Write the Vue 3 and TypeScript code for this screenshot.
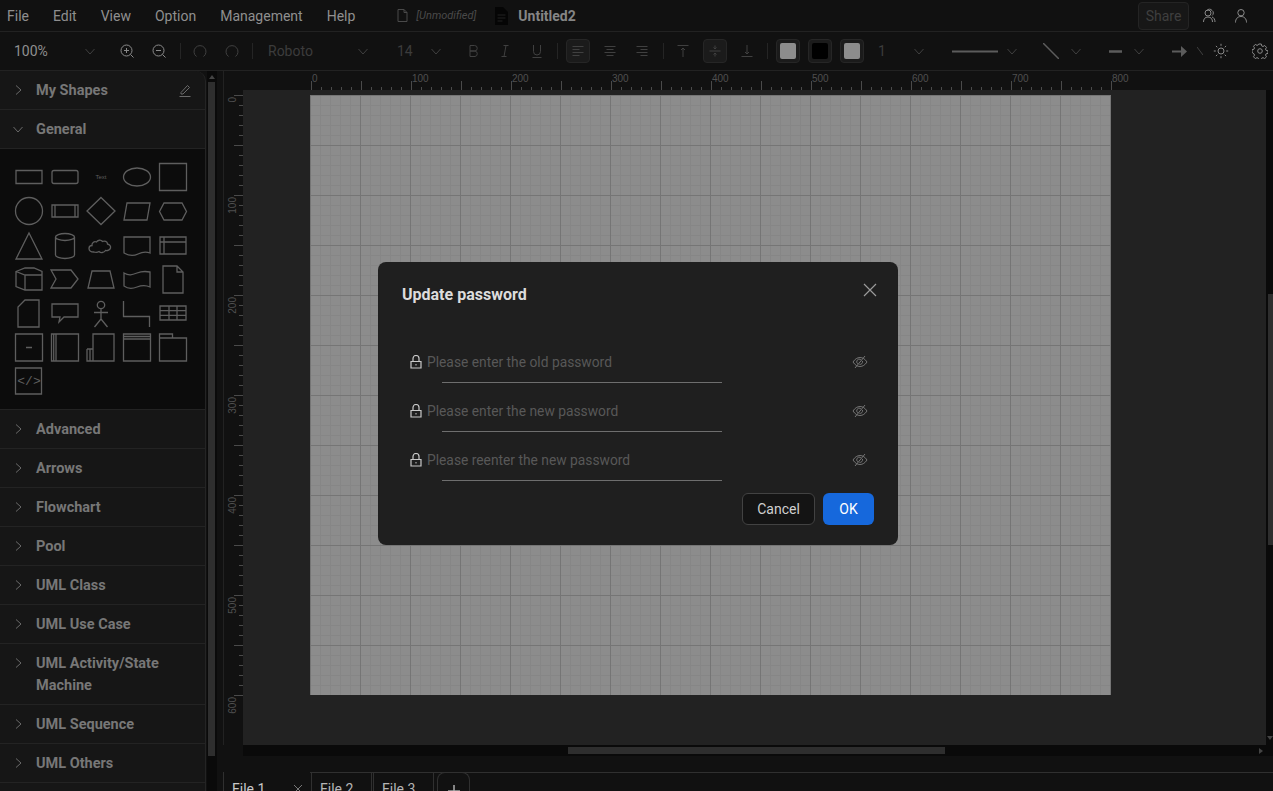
<script setup lang="ts">
interface ToolItem {
  kind: 'text' | 'icon' | 'sep' | 'swatch'
  ml: number
  w?: number
  label?: string
  icon?: string
  active?: boolean
  fill?: string
  dim?: boolean
}

interface Shape {
  d: string
  text?: string
  mono?: boolean
}

const icons: Record<string, string> = {
  chevron: 'M3.5 6l4.5 5 4.5-5',
  zoomIn: 'M2 7.5a5.5 5.5 0 1 0 11 0a5.5 5.5 0 1 0-11 0zM11.5 11.5l3 3M7.5 5v5M5 7.5h5',
  zoomOut: 'M2 7.5a5.5 5.5 0 1 0 11 0a5.5 5.5 0 1 0-11 0zM11.5 11.5l3 3M5 7.5h5',
  undo: 'M4.5 13.5a6 6 0 1 1 7 0',
  bold: 'M5 2.5h4.5a2.7 2.7 0 0 1 0 5.5H5zM5 8h5a2.8 2.8 0 0 1 0 5.5H5z',
  italic: 'M6.5 2.5h5M4.5 13.5h5M9 2.5l-2 11',
  underline: 'M4.5 2v6.5a3.5 3.5 0 0 0 7 0V2M3.5 14.5h9',
  alignLeft: 'M2.5 3.5h11M2.5 6.5h7M2.5 9.5h11M2.5 12.5h7',
  alignCenter: 'M2.5 3.5h11M4.5 6.5h7M2.5 9.5h11M4.5 12.5h7',
  alignRight: 'M2.5 3.5h11M6.5 6.5h7M2.5 9.5h11M6.5 12.5h7',
  alignTop: 'M2.5 2.5h11M8 5v9M6 7l2-2 2 2',
  alignMiddle: 'M2.5 8h11M8 2.5v3.5M8 10v3.5M6.5 4.5L8 6l1.5-1.5M6.5 11.5L8 10l1.5 1.5',
  alignBottom: 'M2.5 13.5h11M8 2v9M6 9l2 2 2-2',
  sun: 'M5 8a3 3 0 1 0 6 0a3 3 0 1 0-6 0zM8 .8v2M8 13.2v2M.8 8h2M13.2 8h2M2.9 2.9l1.4 1.4M11.7 11.7l1.4 1.4M2.9 13.1l1.4-1.4M11.7 4.3l1.4-1.4',
  gear: 'M6.7 1h2.6l.4 1.9 1.3.6 1.7-1 1.8 1.9-1 1.6.6 1.4 1.9.4v2.6l-1.9.4-.6 1.3 1 1.7-1.8 1.8-1.7-1-1.3.6-.4 1.9H6.7l-.4-1.9-1.3-.6-1.7 1-1.8-1.8 1-1.7-.6-1.3L0 9.3V6.7l1.9-.4.6-1.4-1-1.6 1.8-1.9 1.7 1 1.3-.6zM5.7 8a2.3 2.3 0 1 0 4.6 0a2.3 2.3 0 1 0-4.6 0z',
}

const toolbar: ToolItem[] = [
  { kind: 'text', ml: 14, w: 34, label: '100%' },
  { kind: 'icon', ml: 30, icon: 'chevron', dim: true },
  { kind: 'icon', ml: 13, icon: 'zoomIn' },
  { kind: 'icon', ml: 8, icon: 'zoomOut' },
  { kind: 'sep', ml: 9 },
  { kind: 'icon', ml: 7, icon: 'undo', dim: true },
  { kind: 'icon', ml: 8, icon: 'undo', dim: true },
  { kind: 'sep', ml: 8 },
  { kind: 'text', ml: 15, w: 50, label: 'Roboto', dim: true },
  { kind: 'icon', ml: 33, icon: 'chevron', dim: true },
  { kind: 'text', ml: 22, w: 14, label: '14', dim: true },
  { kind: 'icon', ml: 13, icon: 'chevron', dim: true },
  { kind: 'icon', ml: 13, icon: 'bold', dim: true },
  { kind: 'icon', ml: 8, icon: 'italic', dim: true },
  { kind: 'icon', ml: 8, icon: 'underline', dim: true },
  { kind: 'sep', ml: 8 },
  { kind: 'icon', ml: 8, icon: 'alignLeft', active: true, dim: true },
  { kind: 'icon', ml: 8, icon: 'alignCenter', dim: true },
  { kind: 'icon', ml: 8, icon: 'alignRight', dim: true },
  { kind: 'sep', ml: 9 },
  { kind: 'icon', ml: 7, icon: 'alignTop', dim: true },
  { kind: 'icon', ml: 8, icon: 'alignMiddle', active: true, dim: true },
  { kind: 'icon', ml: 8, icon: 'alignBottom', dim: true },
  { kind: 'sep', ml: 8 },
  { kind: 'swatch', ml: 8, fill: '#8c8c8c' },
  { kind: 'swatch', ml: 8, fill: '#000' },
  { kind: 'swatch', ml: 8, fill: '#8c8c8c' },
  { kind: 'text', ml: 14, w: 8, label: '1', dim: true },
  { kind: 'icon', ml: 21, icon: 'chevron', dim: true },
]

const shapes: Shape[] = [
  { d: 'M5 10.5h26v13H5z' },
  { d: 'M7 10.5h22a2 2 0 0 1 2 2v9a2 2 0 0 1-2 2H7a2 2 0 0 1-2-2v-9a2 2 0 0 1 2-2z' },
  { d: '', text: 'Text' },
  { d: 'M4.5 17a13.5 9 0 1 0 27 0a13.5 9 0 1 0-27 0z' },
  { d: 'M4.5 3.5h27v27h-27z' },
  { d: 'M4.5 17a13.5 13.5 0 1 0 27 0a13.5 13.5 0 1 0-27 0z' },
  { d: 'M5 11h26v12H5zM8 11v12M28 11v12' },
  { d: 'M18 3.5L32 17L18 30.5L4 17z' },
  { d: 'M8 9h23l-3 17H5z' },
  { d: 'M9 9h18l4.5 8.5-4.5 8.5H9L4.5 17.5z' },
  { d: 'M18 5L31 31H5z' },
  { d: 'M8.5 9a9.5 3.5 0 0 1 19 0v18a9.5 3.5 0 0 1-19 0zM8.5 9a9.5 3.5 0 0 0 19 0' },
  { d: 'M11 24c-3 0-5-1.5-5-3.5s1.5-3 3-3c-.5-2.5 2-4.5 4.5-3.5 1-2 4.5-2.5 6-.5 2-1 5 0 5 2.5 2 .5 3.5 2 3 4s-3 3-5 2.5c-1.5 2.5-5 2.5-6.5 1-1.5 1-3.5 1-5 .5z' },
  { d: 'M5 9h26v16c-5-2-8-1-12 1s-9 2-14-1z' },
  { d: 'M5 9h26v17H5zM5 14h26M9 9v17' },
  { d: 'M5 9.5l9-3.5h9l8 3.5V28H14l-9-3.5zM5 9.5l9 3.5h17M14 13v15' },
  { d: 'M4 8h20l7 9-7 9H4l5-9z' },
  { d: 'M9 9h18l4 17H5z' },
  { d: 'M5 11c5 3 8 2 13 0s8-2 13-1v15c-4-2-8-2-13 0s-9 2-13-1z' },
  { d: 'M8 4h14l6 6v21H8zM22 4v6h6' },
  { d: 'M14 4h14v27H7V11z' },
  { d: 'M5 8h26v13H17l-5 5 1-5H5z' },
  { d: 'M14.3 9a3.7 3.7 0 1 0 7.4 0a3.7 3.7 0 1 0-7.4 0zM18 13v10M11 16.5h14M18 23l-6.5 8M18 23l6.5 8' },
  { d: 'M4.5 5v15.5h26V31' },
  { d: 'M5 10h26v14H5zM5 14.7h26M5 19.3h26M14 10v14M22 10v14' },
  { d: 'M4.5 4h27v27h-27zM15 17.5h6' },
  { d: 'M4.5 4h27v27h-27zM9 4v27M6.7 4v27' },
  { d: 'M10 31V4h21v27zM4 19h6M4 19v12h6M7 19v12' },
  { d: 'M4.5 4h27v27h-27zM4.5 9h27M4.5 6.500h27' },
  { d: 'M4.5 4h13v4h14v23h-27zM4.5 8h13' },
  { d: 'M4.5 4h26v26h-26z', text: '</>', mono: true },
]

const topPanels = ['My Shapes', 'General']
const panels = [
  'Advanced',
  'Arrows',
  'Flowchart',
  'Pool',
  'UML Class',
  'UML Use Case',
  'UML Activity/State Machine',
  'UML Sequence',
  'UML Others',
]

const menus = ['File', 'Edit', 'View', 'Option', 'Management', 'Help']
const tabs = ['File 1', 'File 2', 'File 3']
const fields = [
  'Please enter the old password',
  'Please enter the new password',
  'Please reenter the new password',
]

const hTicks = Array.from({ length: 81 }, (_, i) => i * 10)
const vTicks = Array.from({ length: 61 }, (_, i) => i * 10)
</script>

<template>
  <div class="app">
    <header class="menubar">
      <nav class="menus">
        <span v-for="menu in menus" :key="menu">{{ menu }}</span>
      </nav>
      <div class="doc-state">
        <svg width="13" height="15" viewBox="0 0 13 15" fill="none" stroke="#4a4a4a">
          <path d="M2 1.5h6l3 3v9H2zM8 1.5v3h3" />
        </svg>
        <em>[Unmodified]</em>
      </div>
      <div class="doc-name">
        <svg width="13" height="18" viewBox="0 0 13 18">
          <path d="M0 0h8l5 5v13H0z" fill="#050505" />
          <path d="M2.5 8h8M2.5 11h8M2.5 14h5" stroke="#222" />
        </svg>
        <strong>Untitled2</strong>
      </div>
      <div class="menu-right">
        <button class="share" type="button">Share</button>
        <svg width="16" height="16" viewBox="0 0 16 16" fill="none" stroke="#8a8a8a">
          <path d="M4 5a3 3 0 1 0 6 0a3 3 0 1 0-6 0zM2.5 14c0-3 1.500-5 4.500-5s4.500 2 4.500 5M6 2.500a3 3 0 0 1 5 0a3 3 0 0 1 0 5M11 9c2 .5 3 2.500 3 5" />
        </svg>
        <svg width="16" height="16" viewBox="0 0 16 16" fill="none" stroke="#8a8a8a">
          <path d="M4.800 4.700a3.200 3.200 0 1 0 6.400 0a3.200 3.200 0 1 0-6.400 0zM2.500 14.500c0-3.500 2-6 5.500-6s5.500 2.500 5.500 6" />
        </svg>
      </div>
    </header>

    <div class="toolbar">
      <template v-for="(item, i) in toolbar" :key="i">
        <span v-if="item.kind === 'sep'" class="sep" :style="{ marginLeft: item.ml + 'px' }"></span>
        <span
          v-else-if="item.kind === 'text'"
          class="tool-text"
          :class="{ dim: item.dim }"
          :style="{ marginLeft: item.ml + 'px', width: item.w + 'px' }"
        >{{ item.label }}</span>
        <span
          v-else-if="item.kind === 'swatch'"
          class="tool-btn active"
          :style="{ marginLeft: item.ml + 'px' }"
        >
          <i class="swatch" :style="{ background: item.fill }"></i>
        </span>
        <span
          v-else
          class="tool-btn"
          :class="{ active: item.active }"
          :style="{ marginLeft: item.ml + 'px' }"
        >
          <svg width="16" height="16" viewBox="0 0 16 16" fill="none" :stroke="item.dim ? '#404040' : '#8a8a8a'">
            <path :d="icons[item.icon ?? 'chevron']" />
          </svg>
        </span>
      </template>
      <svg class="line-style" width="46" height="3"><path d="M0 1.500h46" stroke="#5c5c5c" stroke-width="2" /></svg>
      <span class="tool-btn chev-2">
        <svg width="16" height="16" viewBox="0 0 16 16" fill="none" stroke="#404040"><path :d="icons.chevron" /></svg>
      </span>
      <svg class="line-diag" width="16" height="16"><path d="M0 0l16 16" stroke="#5c5c5c" stroke-width="1.500" /></svg>
      <span class="tool-btn chev-5">
        <svg width="16" height="16" viewBox="0 0 16 16" fill="none" stroke="#404040"><path :d="icons.chevron" /></svg>
      </span>
      <svg class="line-dash" width="13" height="3"><path d="M0 1.500h13" stroke="#5c5c5c" stroke-width="2.500" /></svg>
      <span class="tool-btn chev-5">
        <svg width="16" height="16" viewBox="0 0 16 16" fill="none" stroke="#404040"><path :d="icons.chevron" /></svg>
      </span>
      <svg class="line-arrow" width="15" height="11"><path d="M0 4.500h9V0l6 5.500L9 11V6.500H0z" fill="#5c5c5c" /></svg>
      <svg class="mini-chev" width="6" height="8"><path d="M0 0l6 8" stroke="#404040" /></svg>
      <span class="tool-btn sun">
        <svg width="16" height="16" viewBox="0 0 16 16" fill="none" stroke="#8a8a8a"><path :d="icons.sun" /></svg>
      </span>
      <span class="tool-btn gear">
        <svg width="16" height="16" viewBox="0 0 16 16" fill="none" stroke="#8a8a8a"><path :d="icons.gear" /></svg>
      </span>
    </div>

    <div class="workspace">
      <aside class="sidebar">
        <div v-for="(title, i) in topPanels" :key="title" class="panel">
          <svg class="chev" :class="{ open: i === 1 }" width="16" height="16" viewBox="0 0 16 16" fill="none" stroke="#6a6a6a">
            <path :d="icons.chevron" />
          </svg>
          <span>{{ title }}</span>
          <svg v-if="i === 0" class="pencil" width="14" height="14" viewBox="0 0 14 14" fill="none" stroke="#6a6a6a">
            <path d="M3 9.500L9.500 2.500l2 2L5 11H3zM1.500 13.500h11" />
          </svg>
        </div>
        <div class="shapes">
          <svg v-for="(shape, i) in shapes" :key="i" width="36" height="34" viewBox="0 0 36 34" fill="none" stroke="#5e5e5e" stroke-width="1.300">
            <path v-if="shape.d" :d="shape.d" />
            <text v-if="shape.text" x="18" :y="shape.mono ? 21 : 19" text-anchor="middle" :class="shape.mono ? 'mono' : 'tiny'">{{ shape.text }}</text>
          </svg>
        </div>
        <div v-for="title in panels" :key="title" class="panel">
          <svg class="chev" width="16" height="16" viewBox="0 0 16 16" fill="none" stroke="#6a6a6a">
            <path :d="icons.chevron" />
          </svg>
          <span>{{ title }}</span>
        </div>
      </aside>
      <div class="side-scroll"><i class="up"></i><b></b></div>

      <main class="editor">
        <div class="ruler-top">
          <svg width="1030" height="20">
            <g v-for="t in hTicks" :key="t">
              <path :d="`M${68.5 + t} ${t % 50 === 0 ? 10 : 16}V21`" stroke="#4a4a4a" />
              <text v-if="t % 100 === 0" :x="69 + t" y="11" class="ruler-label">{{ t }}</text>
            </g>
          </svg>
        </div>
        <div class="canvas-row">
          <div class="ruler-left">
            <svg width="20" height="655">
              <g v-for="t in vTicks" :key="t">
                <path :d="`M${t % 50 === 0 ? 11 : 16} ${5.5 + t}H20`" stroke="#4a4a4a" />
                <text v-if="t % 100 === 0" class="ruler-label" text-anchor="end" :transform="`translate(13 ${t + 7}) rotate(-90)`">{{ t }}</text>
              </g>
            </svg>
          </div>
          <div class="canvas">
            <div class="paper"></div>
          </div>
          <div class="canvas-vscroll"><b></b><i class="down"></i></div>
        </div>
        <div class="canvas-hscroll"><b></b><i class="right"></i></div>
        <div class="tabs">
          <div v-for="(tab, i) in tabs" :key="tab" class="tab" :class="{ current: i === 0 }">
            {{ tab }}
            <svg v-if="i === 0" width="10" height="10" viewBox="0 0 10 10" stroke="#777"><path d="M1 1l8 8M9 1l-8 8" /></svg>
          </div>
          <div class="tab add">
            <svg width="14" height="14" viewBox="0 0 14 14" stroke="#aaa" stroke-width="1.500"><path d="M7 1v12M1 7h12" /></svg>
          </div>
        </div>
      </main>
    </div>

    <div class="mask">
      <form class="dialog" @submit.prevent>
        <svg class="close" width="14" height="14" viewBox="0 0 14 14" stroke="#9a9a9a" stroke-width="1.200"><path d="M1 1l12 12M13 1L1 13" /></svg>
        <h2>Update password</h2>
        <div class="fields">
          <div v-for="field in fields" :key="field" class="field">
            <label class="field-row">
              <svg width="12" height="14" viewBox="0 0 12 14" fill="none" stroke="#c8c8c8" stroke-width="1.200">
                <path d="M1 6.500h10v6.500H1zM3 6.500V3.500a3 3 0 0 1 6 0v3" />
                <path d="M5.500 9.700h1" stroke-width="1.600" />
              </svg>
              <input type="password" :placeholder="field" />
              <svg width="16" height="14" viewBox="0 0 16 14" fill="none" stroke="#747474">
                <path d="M1 7c2-3 4.300-4.500 7-4.500S13 4 15 7c-2 3-4.300 4.500-7 4.500S3 10 1 7zM5.800 8.800a2.500 2.500 0 0 1 3-4.200M10.400 6a2.500 2.500 0 0 1-3 3.300M13 1L3 13" />
              </svg>
            </label>
            <div class="field-line"></div>
          </div>
        </div>
        <footer class="actions">
          <button type="button" class="btn-cancel">Cancel</button>
          <button type="submit" class="btn-ok">OK</button>
        </footer>
      </form>
    </div>
  </div>
</template>

<style>
html,
body {
  background: #111;
  margin: 0;
  overflow: hidden;
}
</style>

<style scoped>
.app {
  background: #111;
  color: #8f8f8f;
  display: flex;
  flex-direction: column;
  font-family: Roboto, 'Noto Sans', sans-serif;
  font-size: 14px;
  height: 791px;
  overflow: hidden;
  position: relative;
  width: 1273px;
}

.menubar {
  align-items: center;
  border-bottom: 1px solid #222;
  box-sizing: border-box;
  display: flex;
  flex: none;
  height: 32px;
  padding-left: 7px;
}

.menus {
  display: flex;
  gap: 24px;
}

.doc-state {
  align-items: center;
  color: #4a4a4a;
  display: flex;
  font-size: 11px;
  gap: 7px;
  margin-left: 41px;
  width: 99px;
}

.doc-name {
  align-items: center;
  display: flex;
  gap: 10px;
}

.doc-name strong {
  color: #858585;
}

.menu-right {
  align-items: center;
  display: flex;
  gap: 16px;
  margin-left: auto;
  padding-right: 24px;
}

.share {
  background: #171717;
  border: 1px solid #242424;
  border-radius: 4px;
  color: #3f3f3f;
  font: inherit;
  height: 28px;
  margin-right: -4px;
  padding: 0;
  width: 51px;
}

.toolbar {
  align-items: center;
  box-sizing: border-box;
  display: flex;
  flex: none;
  height: 38px;
}

.tool-text {
  white-space: nowrap;
}

.tool-text.dim {
  color: #3c3c3c;
}

.sep {
  background: #252525;
  height: 16px;
  width: 1px;
}

.tool-btn {
  align-items: center;
  border: 1px solid transparent;
  border-radius: 4px;
  box-sizing: border-box;
  display: flex;
  flex: none;
  height: 24px;
  justify-content: center;
  width: 24px;
}

.tool-btn.active {
  background: #1b1b1b;
  border-color: #262626;
}

.swatch {
  border-radius: 2px;
  height: 16px;
  width: 16px;
}

.line-style {
  margin-left: 21px;
}

.chev-2 {
  margin-left: 2px;
}

.line-diag {
  margin-left: 19px;
}

.chev-5 {
  margin-left: 5px;
}

.line-dash,
.line-arrow {
  margin-left: 21px;
}

.mini-chev {
  margin-left: 10px;
}

.sun {
  margin-left: 6px;
}

.gear {
  margin-left: 15px;
}

.workspace {
  border-top: 1px solid #222;
  display: flex;
  flex: 1;
  min-height: 0;
}

.sidebar {
  background: #161616;
  border-radius: 0 10px 0 0;
  border-right: 1px solid #242424;
  box-sizing: border-box;
  flex: none;
  height: 720px;
  overflow: hidden;
  width: 206px;
}

.panel {
  align-items: center;
  border-bottom: 1px solid #232323;
  box-sizing: border-box;
  color: #777;
  display: flex;
  font-size: 14.5px;
  font-weight: 700;
  line-height: 22px;
  min-height: 39px;
  padding: 9px 36px 7px;
  position: relative;
}

.panel span {
  display: block;
}

.chev {
  left: 10px;
  position: absolute;
  top: 11px;
  transform: rotate(-90deg);
}

.chev.open {
  transform: none;
}

.pencil {
  position: absolute;
  right: 13px;
  top: 12px;
}

.shapes {
  background: #0c0c0c;
  border-bottom: 1px solid #232323;
  box-sizing: border-box;
  display: grid;
  grid-auto-rows: 34px;
  grid-template-columns: repeat(5, 36px);
  height: 261px;
  padding: 11px 0 0 11px;
}

.tiny {
  fill: #5e5e5e;
  font-family: 'Liberation Sans', sans-serif;
  font-size: 6px;
  stroke: none;
}

.mono {
  fill: #5e5e5e;
  font-family: 'Liberation Mono', monospace;
  font-size: 13px;
  stroke: none;
}

.side-scroll {
  background: #0a0a0a;
  box-sizing: border-box;
  flex: none;
  margin-left: 1px;
  padding-top: 11px;
  position: relative;
  width: 10px;
}

.side-scroll b {
  background: #2e2e2e;
  display: block;
  height: 674px;
  margin-left: 1px;
  width: 7px;
}

.up {
  border-bottom: 4px solid #444;
  border-left: 3px solid transparent;
  border-right: 3px solid transparent;
  left: 2px;
  position: absolute;
  top: 4px;
}

.editor {
  display: flex;
  flex: 1;
  flex-direction: column;
  margin-left: 6px;
  min-width: 0;
}

.ruler-top {
  border-left: 1px solid #222;
  flex: none;
  height: 19px;
  padding-left: 19px;
}

.ruler-top svg {
  display: block;
  overflow: visible;
}

.ruler-label {
  fill: #4f4f4f;
  font-family: 'Liberation Sans', sans-serif;
  font-size: 10px;
}

.canvas-row {
  display: flex;
  flex: none;
  height: 655px;
}

.ruler-left {
  border-left: 1px solid #222;
  box-sizing: border-box;
  flex: none;
  width: 20px;
}

.ruler-left svg {
  display: block;
  margin-left: -1px;
}

.canvas {
  background: #222;
  flex: 1;
  padding: 5px 0 0 67px;
}

.paper {
  background-color: #8c8c8c;
  background-image:
    linear-gradient(#757575 1px, transparent 1px),
    linear-gradient(90deg, #757575 1px, transparent 1px),
    linear-gradient(#868686 1px, transparent 1px),
    linear-gradient(90deg, #868686 1px, transparent 1px);
  background-size: 50px 50px, 50px 50px, 10px 10px, 10px 10px;
  height: 600px;
  width: 801px;
}

.canvas-vscroll {
  background: #0a0a0a;
  flex: none;
  position: relative;
  width: 7px;
}

.canvas-vscroll b {
  background: #2e2e2e;
  height: 251px;
  left: 2px;
  position: absolute;
  top: 204px;
  width: 5px;
}

.down {
  border-left: 3px solid transparent;
  border-right: 3px solid transparent;
  border-top: 4px solid #444;
  bottom: 5px;
  left: 1px;
  position: absolute;
}

.canvas-hscroll {
  background: #0a0a0a;
  flex: none;
  height: 11px;
  margin-left: 20px;
  position: relative;
}

.canvas-hscroll b {
  background: #2e2e2e;
  height: 7px;
  left: 325px;
  position: absolute;
  top: 2px;
  width: 377px;
}

.right {
  border-bottom: 3px solid transparent;
  border-left: 4px solid #444;
  border-top: 3px solid transparent;
  position: absolute;
  right: 10px;
  top: 3px;
}

.tabs {
  display: flex;
  flex: none;
  height: 20px;
  margin-top: 16px;
  position: relative;
}

.tabs::after {
  background: #303030;
  content: '';
  height: 1px;
  left: 87px;
  position: absolute;
  right: 0;
  top: 0;
}

.tab {
  border-left: 1px solid #303030;
  border-right: 1px solid #303030;
  box-sizing: border-box;
  color: #b5b5b5;
  line-height: 22px;
  padding: 6px 8px 0;
  white-space: nowrap;
  width: 61px;
}

.tab.current {
  align-items: flex-start;
  border-right: 0;
  color: #c8c8c8;
  display: flex;
  justify-content: space-between;
  margin-right: 1px;
  padding-right: 7px;
  width: 87px;
}

.tab.current svg {
  flex: none;
  margin-top: 6px;
}

.tab + .tab {
  margin-right: 1px;
}

.tab.add {
  border: 1px solid #303030;
  border-bottom: 0;
  border-radius: 8px 8px 0 0;
  margin-left: 2px;
  padding: 9px 0 0 9px;
  position: relative;
  width: 33px;
  z-index: 1;
}

.mask {
  box-sizing: border-box;
  display: flex;
  inset: 0;
  justify-content: center;
  padding: 262px 0 0 3px;
  position: absolute;
}

.dialog {
  background: #1f1f1f;
  border-radius: 8px;
  box-sizing: border-box;
  height: 283px;
  padding: 21px 24px 20px;
  position: relative;
  width: 520px;
}

.close {
  position: absolute;
  right: 21px;
  top: 21px;
}

h2 {
  color: #dcdcdc;
  font-size: 16px;
  font-weight: 700;
  line-height: 24px;
  margin: 0 0 39px;
}

.fields {
  display: flex;
  flex-direction: column;
  gap: 12px;
}

.field-row {
  align-items: center;
  display: flex;
  font-size: 13.8px;
  gap: 5px;
  height: 32px;
  margin-bottom: 4px;
  padding: 0 6px 0 8px;
}

.field-row input {
  background: transparent;
  border: 0;
  color: #ccc;
  flex: 1;
  font: inherit;
  outline: none;
  padding: 0;
}

.field-row input::placeholder {
  color: #585858;
  opacity: 1;
}

.field-line {
  background: #6e6e6e;
  height: 1px;
  margin-left: 40px;
  width: 280px;
}

.actions {
  display: flex;
  gap: 8px;
  justify-content: flex-end;
  margin-top: 12px;
}

.actions button {
  border-radius: 6px;
  font: inherit;
  height: 32px;
  padding: 0;
}

.btn-cancel {
  background: #141414;
  border: 1px solid #424242;
  color: #d0d0d0;
  width: 73px;
}

.btn-ok {
  background: #1668dc;
  border: 0;
  color: #fff;
  width: 51px;
}
</style>
